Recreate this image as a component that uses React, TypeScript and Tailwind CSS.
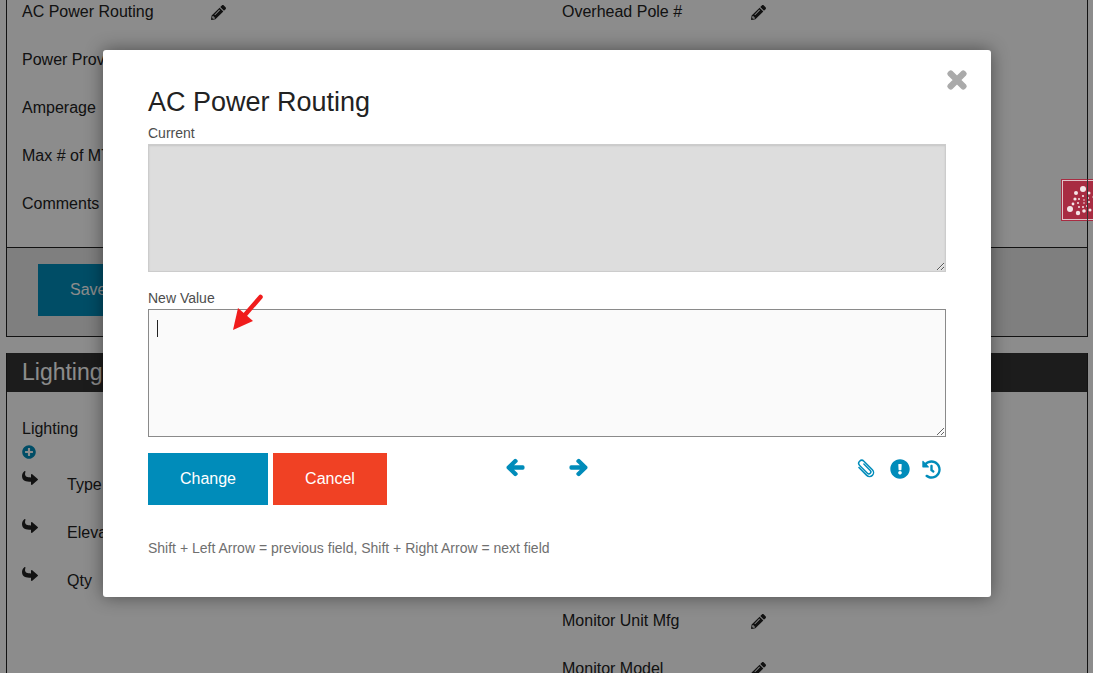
import { FaArrowLeft, FaArrowRight, FaExclamationCircle, FaHistory, FaPencilAlt, FaPlusCircle, FaShare, FaTimes } from "react-icons/fa";

const powerLeft = ["AC Power Routing", "Power Provider", "Amperage", "Max # of MTUs", "Comments"];
const lightingRows = ["Type", "Elevation", "Qty"];
const monitorRows = ["Monitor Unit Mfg", "Monitor Model"];

function FieldRow({ label }: { label: string }) {
  return (
    <div className="flex h-12 items-center">
      <span className="w-[190px]">{label}</span>
      <FaPencilAlt size={15} className="-translate-x-px text-[#222]" />
    </div>
  );
}

function SpinnerLogo() {
  const dots = [
    [20, 8, 3], [13, 12, 2], [12, 18, 1.6], [10, 23, 1.4], [7, 28, 3], [15, 32, 2.2], [21, 30, 1.8], [27, 29, 1.5],
    [26, 12, 1.5], [31, 16, 1.5], [33, 23, 1.5],
    [20, 15, 1.1], [16, 18, 1], [15, 22, 1], [16, 26, 1], [20, 26, 1], [24, 25, 1], [26, 21, 1], [25, 17, 1], [21, 19, 0.8], [21, 22, 0.8],
  ];
  return (
    <div className="absolute left-[1061px] top-[179px] h-[42px] w-[42px] border border-[#a82c42] bg-[#a82c42]">
      <div className="h-full w-full border border-[#e0c4c9]">
        <svg viewBox="0 0 38 38" className="h-full w-full">
          {dots.map(([x, y, r]) => (
            <circle key={`${x}-${y}`} cx={x} cy={y} r={r} fill="#f5e6e8" />
          ))}
        </svg>
      </div>
      <span className="absolute -top-px left-[25px] h-[42px] w-px bg-[#333]" />
    </div>
  );
}

export default function App() {
  return (
    <div className="relative h-[673px] w-[1093px] overflow-hidden bg-white font-['Liberation_Sans',Arial,sans-serif] text-base text-[#222]">
      <div className="-mt-[12px] pl-[6px] pr-[5px]">
        <section className="border-x border-b border-[#222]">
          <div className="grid grid-cols-2 pb-[19px]">
            <div className="px-[15px]">
              {powerLeft.map((label) => (
                <FieldRow key={label} label={label} />
              ))}
            </div>
            <div className="px-[15px]">
              <FieldRow label="Overhead Pole #" />
            </div>
          </div>
          <div className="border-t border-[#222] bg-[#e8e8e8] px-[31px] pb-5 pt-4">
            <button type="button" className="h-[52px] bg-[#008cba] px-8 text-white">
              Save
            </button>
          </div>
        </section>

        <section className="mt-[16px] h-[400px] border-x border-[#222]">
          <h2 className="flex h-[39px] items-center bg-[#333] px-[15px] text-[23px] text-white">Lighting</h2>
          <div className="grid grid-cols-2">
            <div className="px-[15px] pt-[25px]">
              <div className="leading-6">Lighting</div>
              <FaPlusCircle size={14} className="mb-[2px] mt-[4px] text-[#008cba]" />
              {lightingRows.map((label) => (
                <div key={label} className="flex h-12 items-center">
                  <span className="w-[45px] -translate-y-[7px]">
                    <FaShare size={16} className="-scale-y-100" />
                  </span>
                  <span>{label}</span>
                </div>
              ))}
            </div>
            <div className="px-[15px] pt-[205px]">
              {monitorRows.map((label) => (
                <FieldRow key={label} label={label} />
              ))}
            </div>
          </div>
        </section>
      </div>

      <div className="absolute inset-0 bg-black/[.45]" />

      <SpinnerLogo />

      <div className="absolute left-[103px] top-[50px] h-[547px] w-[888px] rounded-[3px] bg-white px-[45px] pt-[36px] shadow-[0_0_18px_rgba(0,0,0,0.45)]">
        <FaTimes size={26} stroke="currentColor" strokeWidth={30} className="absolute right-[21px] top-[17px] text-[#aaa]" />
        <h1 className="text-[27px] leading-[32px] text-[#222]">AC Power Routing</h1>
        <label className="mt-[6px] block text-sm leading-[18px] text-[#4d4d4d]">Current</label>
        <textarea
          disabled
          className="mt-[2px] block h-[128px] w-full border border-[#ccc] bg-[#ddd] shadow-[inset_0_1px_2px_rgba(0,0,0,0.1)]"
        />
        <label className="mt-[17px] block text-sm leading-[18px] text-[#4d4d4d]">New Value</label>
        <div className="relative mt-[2px]">
          <textarea className="block h-[128px] w-full border border-[#8a8a8a] bg-[#fafafa] outline-none" />
          <span className="absolute left-[9px] top-[11px] h-[17px] w-px bg-[#222]" />
          <svg viewBox="0 0 32 38" className="absolute left-[84px] -top-[15px] h-[38px] w-[32px]">
            <path d="M28.5 3 L12 22" stroke="#f01c1c" strokeWidth="4.5" strokeLinecap="round" />
            <path d="M1 36 L6 14 L21 27 Z" fill="#f01c1c" />
          </svg>
        </div>

        <div className="mt-4 flex items-start">
          <button type="button" className="h-[52px] w-[120px] bg-[#008cba] text-white">
            Change
          </button>
          <button type="button" className="ml-[5px] h-[52px] w-[114px] bg-[#f04124] text-white">
            Cancel
          </button>
          <div className="ml-[119px] mt-[5px] flex gap-[44px] text-[#008cba]">
            <FaArrowLeft size={19} stroke="currentColor" strokeWidth={40} />
            <FaArrowRight size={19} stroke="currentColor" strokeWidth={40} />
          </div>
          <div className="ml-auto mr-[5px] mt-[6px] flex items-center text-[#008cba]">
            <svg viewBox="0 0 20 20" className="h-5 w-5" fill="none" stroke="currentColor" strokeWidth="1.5" strokeLinecap="round">
              <g transform="rotate(-45 10 10)">
                <path d="M6 4 V15 a4 4 0 0 0 8 0 V3 a3 3 0 0 0 -6 0 V14 a2 2 0 0 0 4 0 V5" />
              </g>
            </svg>
            <FaExclamationCircle size={20} className="ml-[14px]" />
            <FaHistory size={19} className="ml-[12px]" />
          </div>
        </div>

        <p className="mt-[33px] text-sm leading-5 text-[#6f6f6f]">
          Shift + Left Arrow = previous field, Shift + Right Arrow = next field
        </p>
      </div>
    </div>
  );
}
